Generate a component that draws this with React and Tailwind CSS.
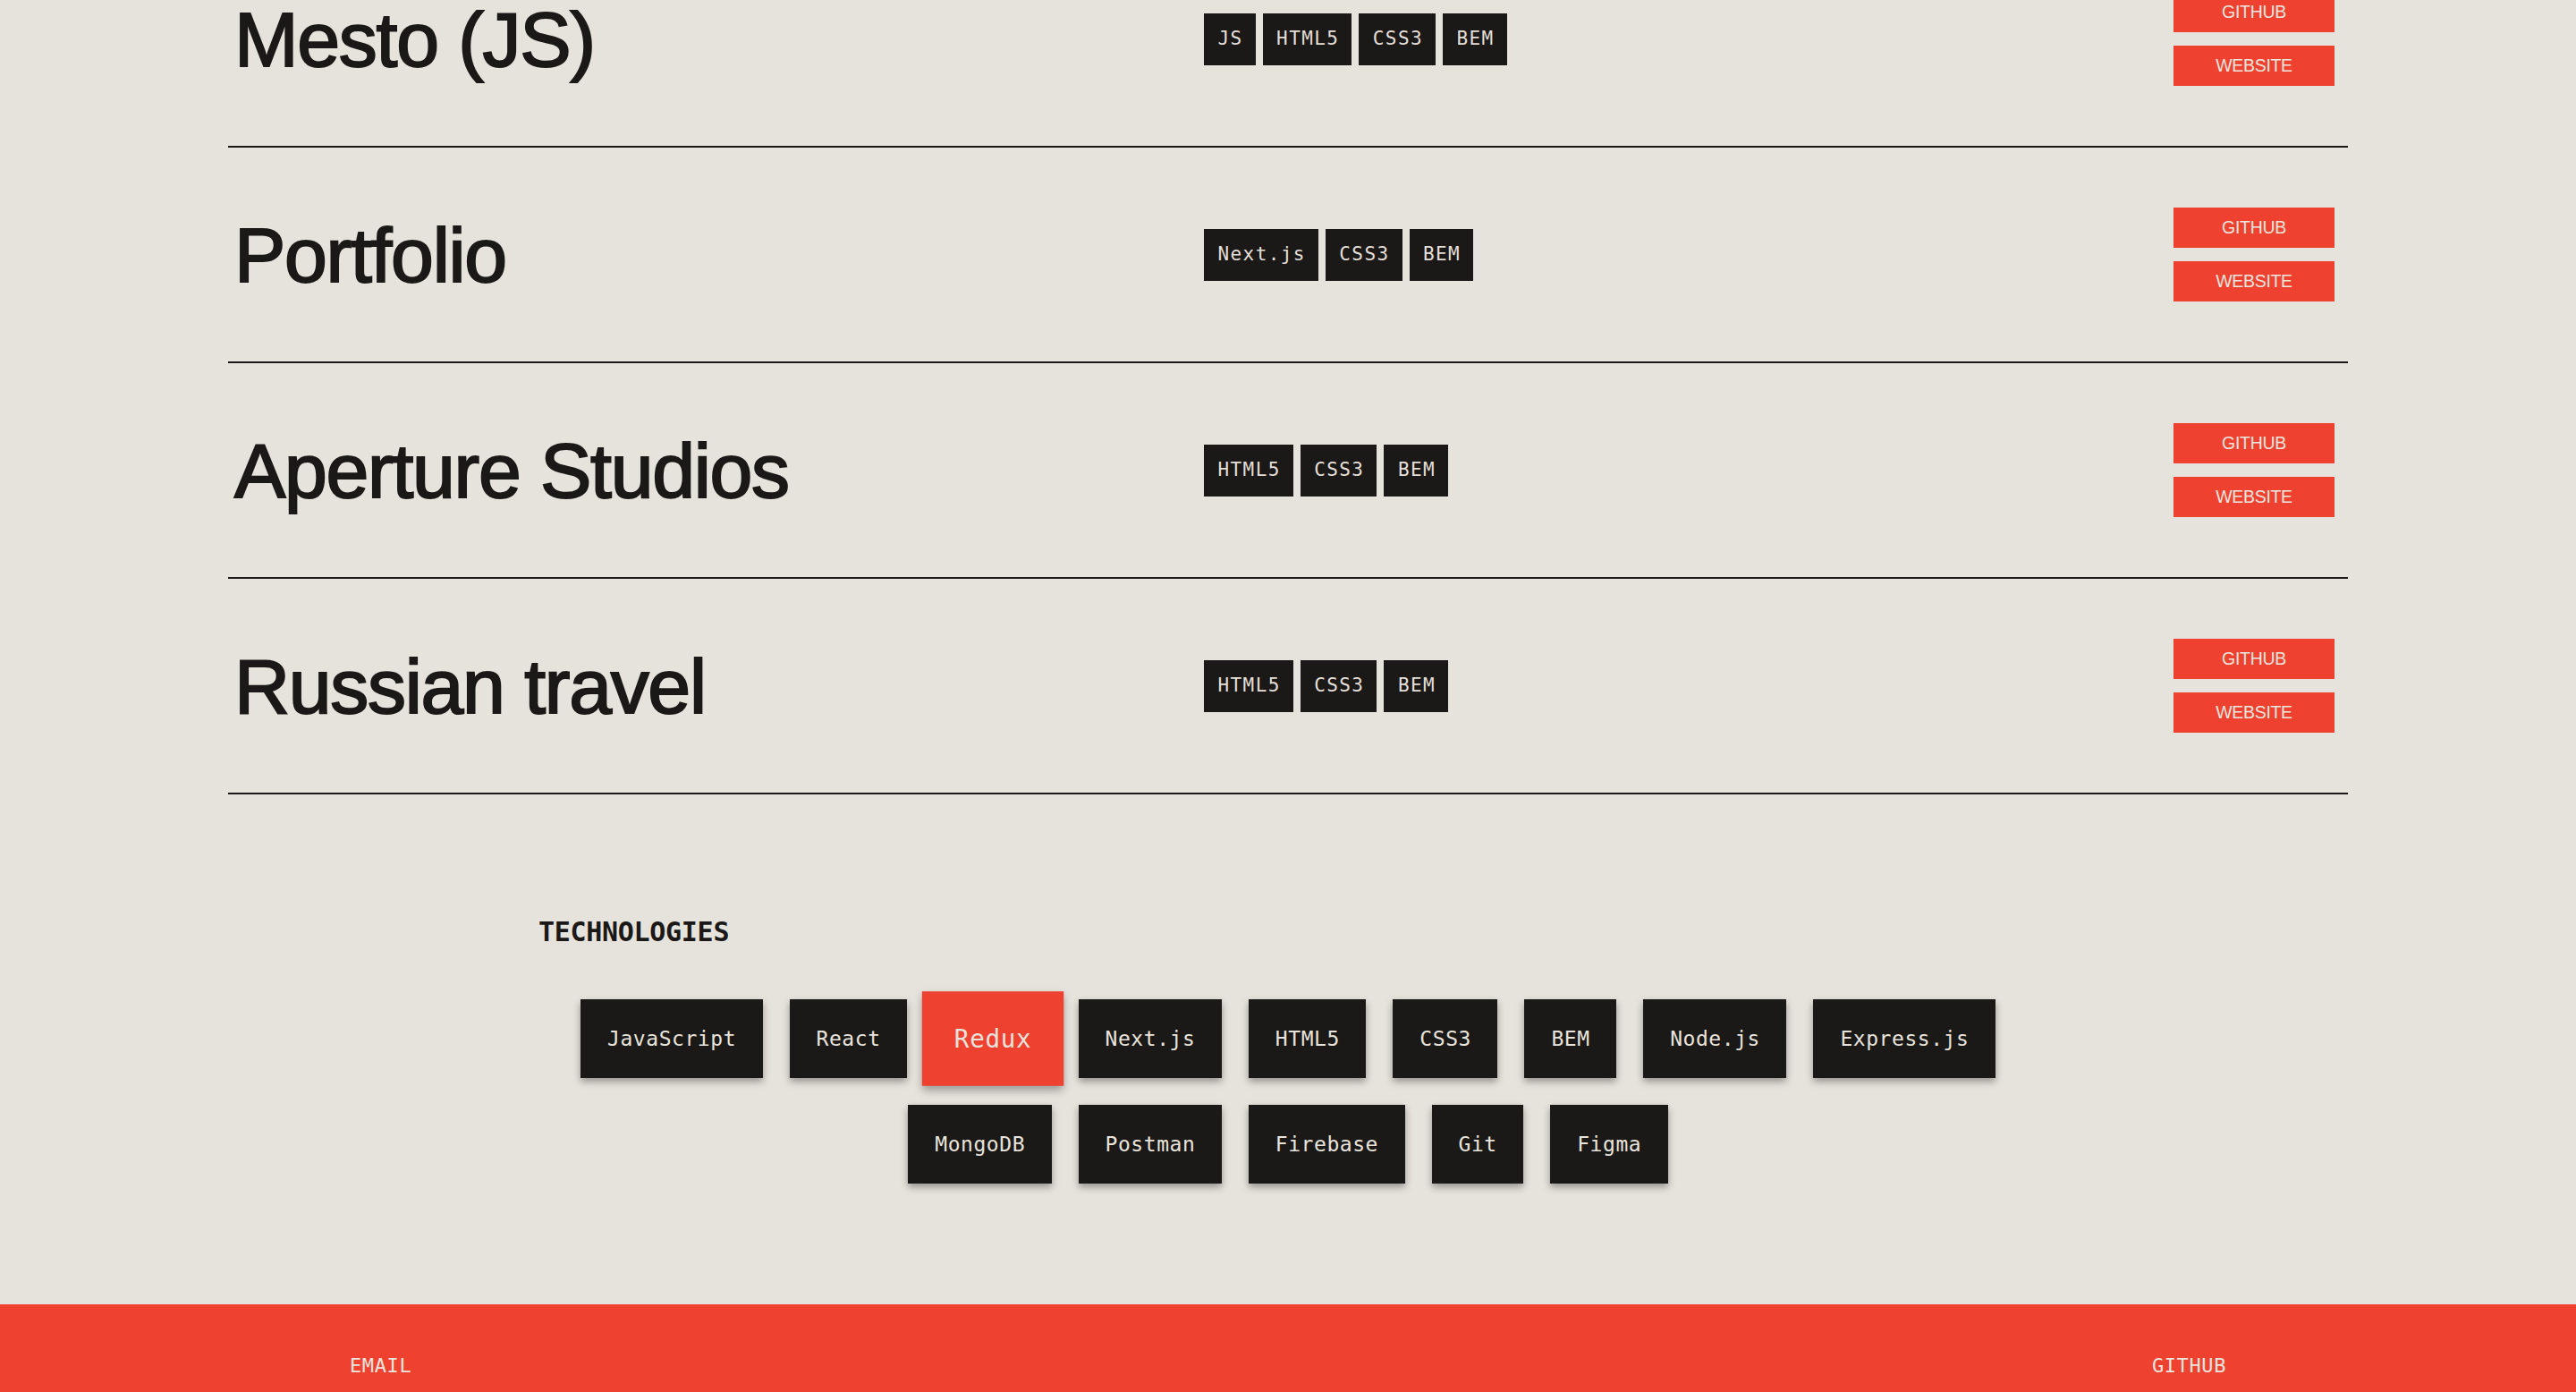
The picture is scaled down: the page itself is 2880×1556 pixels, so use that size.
import React from 'react';

const projects = [
  { title: 'Mesto (JS)', tags: ['JS', 'HTML5', 'CSS3', 'BEM'] },
  { title: 'Portfolio', tags: ['Next.js', 'CSS3', 'BEM'] },
  { title: 'Aperture Studios', tags: ['HTML5', 'CSS3', 'BEM'] },
  { title: 'Russian travel', tags: ['HTML5', 'CSS3', 'BEM'] },
];

const techs = [
  'JavaScript', 'React', 'Redux', 'Next.js', 'HTML5', 'CSS3', 'BEM', 'Node.js', 'Express.js',
  'MongoDB', 'Postman', 'Firebase', 'Git', 'Figma',
];

const mono = "font-['DejaVu_Sans_Mono','Liberation_Mono',monospace]";

const ProjectRow = ({ project, first }) => (
  <div
    className={`flex items-center h-[241px] border-b-2 border-[#1b1917] ${first ? '-mt-[76px]' : ''}`}
  >
    <h3 className="w-[1091px] shrink-0 pl-[7px] text-[86px] leading-none tracking-[-1.3px] text-[#1b1917] font-['Liberation_Sans',Arial,sans-serif] [-webkit-text-stroke:2px_#1b1917]">
      {project.title}
    </h3>
    <ul className="flex flex-1 gap-2">
      {project.tags.map((tag) => (
        <li
          key={tag}
          className={`flex items-center h-[58px] pl-[15.5px] pr-[14px] bg-[#1b1917] text-[#e4dfd8] text-[21px] tracking-[1.4px] ${mono}`}
        >
          {tag}
        </li>
      ))}
    </ul>
    <div className="flex flex-col gap-[15px] w-[180px] mr-[15px]">
      <a className="flex items-center justify-center h-[45px] bg-[#ef4130] text-[#ebe6df] text-[19.5px] tracking-[-0.3px] font-['Liberation_Sans',Arial,sans-serif]">
        GITHUB
      </a>
      <a className="flex items-center justify-center h-[45px] bg-[#ef4130] text-[#ebe6df] text-[19.5px] tracking-[-0.3px] font-['Liberation_Sans',Arial,sans-serif]">
        WEBSITE
      </a>
    </div>
  </div>
);

export default function App() {
  return (
    <div className="h-[1556px] overflow-hidden bg-[#e6e2dc] flex flex-col">
      <section className="mx-auto w-[2370px]">
        {projects.map((p, i) => (
          <ProjectRow key={p.title} project={p} first={i === 0} />
        ))}
      </section>

      <section className="mx-auto w-[1676px] pt-[136px] pb-[135px]">
        <h2 className={`text-[30px] leading-[35px] font-bold tracking-[-0.3px] text-[#1b1917] ${mono}`}>
          TECHNOLOGIES
        </h2>
        <ul className="mt-[58px] flex flex-wrap justify-center gap-[30px]">
          {techs.map((t) => (
            <li
              key={t}
              className={`flex items-center justify-center h-[88px] pl-[30px] pr-[29.5px] text-[23px] tracking-[0.55px] text-[#e8e3dc] shadow-[0_4px_8px_rgba(0,0,0,0.35)] ${mono} ${
                t === 'Redux' ? 'bg-[#ef4130] scale-[1.2]' : 'bg-[#1b1917]'
              }`}
            >
              {t}
            </li>
          ))}
        </ul>
      </section>

      <footer className="flex-1 bg-[#ef4130] flex justify-between px-[391px] pt-[52px]">
        <a className={`h-fit text-[22px] leading-[33px] tracking-[0.6px] text-[#ebe6df] ${mono}`}>EMAIL</a>
        <a className={`h-fit text-[22px] leading-[33px] tracking-[0.6px] text-[#ebe6df] ${mono}`}>GITHUB</a>
      </footer>
    </div>
  );
}
